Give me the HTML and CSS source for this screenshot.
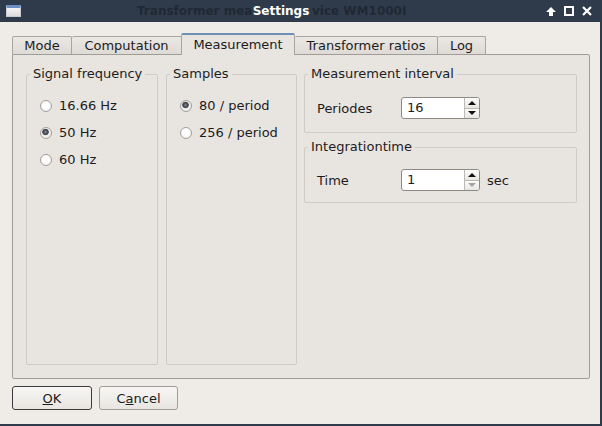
FILE: index.html
```html
<!DOCTYPE html>
<html>
<head>
<meta charset="utf-8">
<link rel="stylesheet" href="styles.css">
</head>
<body>
<div class="window">
  <div class="titlebar">
    <span class="winicon"></span>
    <span class="ghost g1">Transformer mea</span>
    <span class="ghost g2">vice WM1000I</span>
    <span class="title">Settings</span>
    <div class="controls">
      <svg width="10" height="9" viewBox="0 0 10 9"><path d="M5 0 L10 5 H7 V9 H3 V5 H0 Z" fill="#fff"/></svg>
      <svg width="10" height="10" viewBox="0 0 10 10"><rect x="1" y="1" width="8" height="8" fill="none" stroke="#fff" stroke-width="2"/></svg>
      <svg width="10" height="10" viewBox="0 0 10 10"><path d="M1 1 L9 9 M9 1 L1 9" stroke="#fff" stroke-width="2.2"/></svg>
    </div>
  </div>
  <div class="main">
    <div class="tabbar">
      <div class="tab t-mode">Mode</div>
      <div class="tab t-comp">Computation</div>
      <div class="tab t-meas selected">Measurement</div>
      <div class="tab t-ratio">Transformer ratios</div>
      <div class="tab t-log">Log</div>
    </div>
    <div class="pane">
      <fieldset class="group g-signal">
        <legend>Signal frequency</legend>
        <div class="radios">
          <label class="radio"><input type="radio" name="f"> 16.66 Hz</label>
          <label class="radio"><input type="radio" name="f" checked> 50 Hz</label>
          <label class="radio"><input type="radio" name="f"> 60 Hz</label>
        </div>
      </fieldset>
      <fieldset class="group g-samples">
        <legend>Samples</legend>
        <div class="radios">
          <label class="radio"><input type="radio" name="s" checked> 80 / period</label>
          <label class="radio"><input type="radio" name="s"> 256 / period</label>
        </div>
      </fieldset>
      <div class="rightcol">
        <fieldset class="group g-interval">
          <legend>Measurement interval</legend>
          <div class="row">
            <span class="lbl">Periodes</span>
            <div class="spin">
              <span class="val">16</span>
              <div class="arrows">
                <span class="up"></span>
                <span class="down"></span>
              </div>
            </div>
          </div>
        </fieldset>
        <fieldset class="group g-integ">
          <legend>Integrationtime</legend>
          <div class="row">
            <span class="lbl">Time</span>
            <div class="spin">
              <span class="val">1</span>
              <div class="arrows">
                <span class="up"></span>
                <span class="down disabled"></span>
              </div>
            </div>
            <span class="unit">sec</span>
          </div>
        </fieldset>
      </div>
    </div>
    <div class="buttons">
      <button class="btn default"><u>O</u>K</button>
      <button class="btn cancel">C<u>a</u>ncel</button>
    </div>
  </div>
</div>
</body>
</html>
```
FILE: styles.css
```css
html, body {
  margin: 0;
  padding: 0;
  background: #2f3b4a;
}
body {
  width: 602px;
  height: 426px;
  overflow: hidden;
  font-family: "DejaVu Sans", "Liberation Sans", sans-serif;
  font-size: 13px;
  color: #1c1c1c;
}
.window {
  width: 600px;
  height: 424px;
  background: #efece8;
  display: flex;
  flex-direction: column;
}
.titlebar {
  position: relative;
  height: 22px;
  width: 602px;
  background: #2f3b4a;
  display: flex;
  align-items: center;
  justify-content: center;
  font-size: 12px;
  font-weight: bold;
}
.winicon {
  position: absolute;
  left: 6px;
  top: 5px;
  width: 13px;
  height: 8px;
  background: linear-gradient(#f4f4f4, #dcdcdc);
  border: 1px solid #c8ccd2;
  border-top: 3px solid #6b8fc4;
}
.ghost {
  position: absolute;
  top: 4px;
  color: #1f2834;
  white-space: nowrap;
}
.g1 { left: 137px; }
.g2 { left: 312px; }
.title {
  position: relative;
  z-index: 1;
  color: #ffffff;
  margin-left: -40px;
}
.controls {
  position: absolute;
  right: 10px;
  top: 6px;
  display: flex;
  gap: 8px;
  align-items: center;
}
.main {
  flex: 1;
  padding: 11px 11px 0 12px;
  display: flex;
  flex-direction: column;
}
.tabbar {
  display: flex;
  align-items: flex-start;
  height: 22px;
  margin-bottom: -1px;
  position: relative;
  z-index: 1;
}
.tab {
  box-sizing: border-box;
  height: 18px;
  margin-top: 3px;
  border: 1px solid #a8a5a1;
  border-bottom: none;
  border-left: none;
  border-radius: 2px 2px 0 0;
  background: linear-gradient(#ebe8e4, #dedad6);
  text-align: center;
  line-height: 18px;
  white-space: nowrap;
}
.t-mode { width: 60px; border-left: 1px solid #a8a5a1; }
.t-comp { width: 110px; }
.t-meas { width: 113px; }
.t-ratio { width: 143px; }
.t-log { width: 48px; }
.tab.selected {
  height: 22px;
  margin-top: 0;
  background: #e8e4e0;
  border-top: 2px solid #6d8fb3;
  border-left: 1px solid #a8a5a1;
  margin-left: -1px;
  width: 114px;
  line-height: 19px;
}
.pane {
  box-sizing: border-box;
  width: 578px;
  height: 325px;
  border: 1px solid #a09d99;
  border-radius: 0 2px 2px 2px;
  background: #e8e4e0;
  padding: 12px 12px 13px 13px;
  display: flex;
  align-items: stretch;
}
.group {
  margin: 0;
  box-sizing: border-box;
  border: 1px solid #cfcbc6;
  border-radius: 2px;
  min-width: 0;
}
.group legend {
  padding: 0 3px;
  margin-left: 0;
  line-height: 14px;
  height: 14px;
  white-space: nowrap;
}
.g-signal {
  width: 132px;
  padding: 11px 0 0 3px;
  margin-right: 8px;
}
.g-samples {
  width: 131px;
  padding: 11px 0 0 3px;
  margin-right: 7px;
}
.radios {
  padding-left: 10px;
}
.radio {
  display: flex;
  align-items: center;
  height: 27px;
  white-space: nowrap;
}
.radio input {
  appearance: none;
  -webkit-appearance: none;
  margin: 0 7px 0 0;
  width: 12px;
  height: 12px;
  box-sizing: border-box;
  border-radius: 50%;
  border: 1px solid #a29f9b;
  background: radial-gradient(circle at 50% 40%, #ffffff 40%, #ecebe9 100%);
}
.radio input:checked {
  background: radial-gradient(circle at 45% 40%, #8a8f96 0, #3a3f46 2.4px, #5a5f66 3px, #f2f1ef 3.6px, #e9e8e6 100%);
}
.rightcol {
  width: 273px;
  display: flex;
  flex-direction: column;
  gap: 7px;
}
.g-interval {
  height: 66px;
  padding: 16px 12px 13px 3px;
}
.g-integ {
  height: 63px;
  padding: 15px 12px 11px 3px;
}
.row {
  display: flex;
  align-items: center;
  height: 22px;
  padding-left: 9px;
}
.lbl {
  width: 84px;
}
.spin {
  box-sizing: border-box;
  width: 79px;
  height: 22px;
  border: 1px solid #8e8b87;
  border-radius: 3px;
  background: #ffffff;
  display: flex;
}
.val {
  flex: 1;
  padding-left: 5px;
  line-height: 20px;
}
.arrows {
  width: 14px;
  border-left: 1px solid #bdbab6;
  display: flex;
  flex-direction: column;
}
.arrows span {
  flex: 1;
  position: relative;
  background: linear-gradient(#fbfbfa, #e9e7e4);
}
.arrows .up {
  border-bottom: 1px solid #bdbab6;
  border-radius: 0 2px 0 0;
}
.arrows .down {
  border-radius: 0 0 2px 0;
}
.arrows span::after {
  content: "";
  position: absolute;
  left: 3px;
  top: 3px;
  border-left: 4px solid transparent;
  border-right: 4px solid transparent;
}
.arrows .up::after {
  border-bottom: 4px solid #111;
}
.arrows .down::after {
  top: 2px;
  border-top: 4px solid #111;
}
.arrows .down.disabled::after {
  border-top-color: #a3a3a3;
}
.unit {
  margin-left: 7px;
}
.buttons {
  display: flex;
  gap: 7px;
  margin-top: 7px;
}
.btn {
  box-sizing: border-box;
  height: 24px;
  font-family: inherit;
  font-size: 13px;
  color: #1c1c1c;
  border-radius: 3px;
  background: linear-gradient(#f7f6f4, #e8e5e1);
  border: 1px solid #a09d99;
  padding: 0;
}
.btn.default {
  width: 80px;
  border-color: #3a3a3a;
}
.btn.cancel {
  width: 79px;
}
```
